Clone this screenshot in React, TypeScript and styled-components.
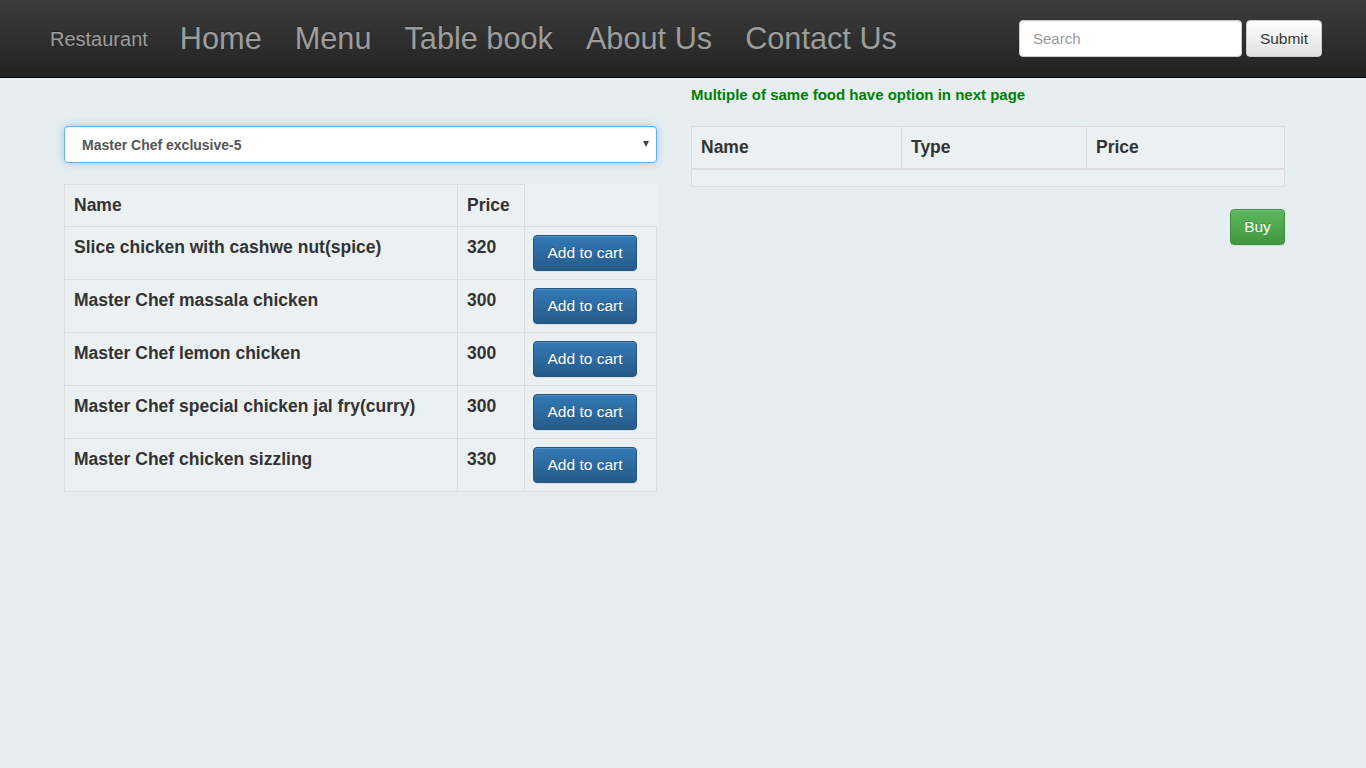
import React from "react";
import styled, { createGlobalStyle } from "styled-components";

const Global = createGlobalStyle`
  html, body { margin: 0; padding: 0; }
  body {
    background: #e6eef1;
    font-family: "Liberation Sans", Arial, Helvetica, sans-serif;
    color: #333;
    min-height: 768px;
  }
  * { box-sizing: border-box; }
`;

const NavBar = styled.nav`
  height: 78px;
  background: linear-gradient(to bottom, #3c3c3c 0%, #222 100%);
  border-bottom: 1px solid #080808;
  display: flex;
  align-items: center;
  padding: 0 44px 0 50px;
`;

const Brand = styled.a`
  font-size: 20px;
  color: #9d9d9d;
  text-decoration: none;
  text-shadow: 0 -1px 0 rgba(0, 0, 0, 0.25);
  margin-right: 32px;
  line-height: 28px;
`;

const NavList = styled.ul`
  display: flex;
  gap: 33px;
  list-style: none;
  margin: 0;
  padding: 0;
  flex: 1;
`;

const NavLink = styled.a`
  font-size: 30.7px;
  color: #9d9d9d;
  text-decoration: none;
  text-shadow: 0 -1px 0 rgba(0, 0, 0, 0.25);
  line-height: 36px;
`;

const SearchForm = styled.form`
  display: flex;
  gap: 4px;
  align-items: center;
`;

const SearchInput = styled.input`
  width: 223px;
  height: 37px;
  font-family: inherit;
  font-size: 15px;
  padding: 6px 13px;
  border: 1px solid #ccc;
  border-radius: 4px;
  background: #fff;
  color: #555;
  box-shadow: inset 0 1px 1px rgba(0, 0, 0, 0.075);
  outline: none;
  &::placeholder { color: #999; }
`;

const SubmitButton = styled.button`
  height: 37px;
  width: 76px;
  font-family: inherit;
  font-size: 15.5px;
  color: #333;
  border: 1px solid #ccc;
  border-radius: 4px;
  background: linear-gradient(to bottom, #fff 0%, #e0e0e0 100%);
  box-shadow: inset 0 1px 0 rgba(255, 255, 255, 0.15), 0 1px 1px rgba(0, 0, 0, 0.075);
  text-shadow: 0 1px 0 #fff;
  padding: 0;
`;

const Main = styled.main`
  display: flex;
  gap: 34px;
  padding-left: 64px;
  align-items: flex-start;
`;

const LeftCol = styled.section`
  width: 593px;
  padding-top: 48px;
`;

const RightCol = styled.section`
  width: 594px;
  padding-top: 7px;
`;

const SelectWrap = styled.div`
  position: relative;
  margin-bottom: 21px;
`;

const Select = styled.select`
  appearance: none;
  -webkit-appearance: none;
  display: block;
  width: 100%;
  height: 37px;
  padding: 0 17px;
  font-family: inherit;
  font-size: 14px;
  font-weight: bold;
  color: #555;
  background: #fff;
  border: 1px solid #66afe9;
  border-radius: 4px;
  box-shadow: inset 0 1px 1px rgba(0, 0, 0, 0.075), 0 0 8px rgba(102, 175, 233, 0.6);
  outline: none;
`;

const Caret = styled.span`
  position: absolute;
  right: 8px;
  top: 15px;
  width: 0;
  height: 0;
  border-left: 3px solid transparent;
  border-right: 3px solid transparent;
  border-top: 6px solid #444;
  pointer-events: none;
`;

const Table = styled.table`
  width: 100%;
  border-collapse: collapse;
  background: #ebf0f2;
  font-size: 17.5px;
  font-weight: bold;
  color: #333;
  line-height: 25px;
`;

const HeadCell = styled.th<{ $w?: number; $blank?: boolean; $thick?: boolean }>`
  text-align: left;
  vertical-align: top;
  padding: 8px 8px 8px 9px;
  border: 1px solid #ddd;
  ${(p) => (p.$thick ? "border-bottom: 2px solid #ddd;" : "")}
  ${(p) => (p.$w ? `width: ${p.$w}px;` : "")}
  ${(p) => (p.$blank ? "border-top-color: transparent; border-right-color: transparent;" : "")}
`;

const Cell = styled.td<{ $action?: boolean }>`
  vertical-align: top;
  padding: 8px 8px 8px ${(p) => (p.$action ? 8 : 9)}px;
  border: 1px solid #ddd;
`;

const EmptyCell = styled.td`
  height: 17px;
  padding: 0;
  border: 1px solid #ddd;
`;

const CartButton = styled.button`
  display: block;
  height: 36px;
  width: 104px;
  font-family: inherit;
  font-size: 15.5px;
  font-weight: normal;
  color: #fff;
  border: 1px solid #245580;
  border-radius: 4px;
  background: linear-gradient(to bottom, #337ab7 0%, #265a88 100%);
  box-shadow: inset 0 1px 0 rgba(255, 255, 255, 0.15), 0 1px 1px rgba(0, 0, 0, 0.075);
  text-shadow: 0 -1px 0 rgba(0, 0, 0, 0.2);
  padding: 0;
`;

const Notice = styled.p`
  margin: 0 0 21px;
  color: #008000;
  font-size: 15px;
  font-weight: bold;
  line-height: 20px;
`;

const BuyRow = styled.div`
  display: flex;
  justify-content: flex-end;
  margin-top: 22px;
`;

const BuyButton = styled.button`
  height: 36px;
  width: 55px;
  font-family: inherit;
  font-size: 15.5px;
  color: #fff;
  border: 1px solid #3e8f3e;
  border-radius: 4px;
  background: linear-gradient(to bottom, #5cb85c 0%, #419641 100%);
  box-shadow: inset 0 1px 0 rgba(255, 255, 255, 0.15), 0 1px 1px rgba(0, 0, 0, 0.075);
  text-shadow: 0 -1px 0 rgba(0, 0, 0, 0.2);
  padding: 0;
`;

const foods = [
  { name: "Slice chicken with cashwe nut(spice)", price: 320 },
  { name: "Master Chef massala chicken", price: 300 },
  { name: "Master Chef lemon chicken", price: 300 },
  { name: "Master Chef special chicken jal fry(curry)", price: 300 },
  { name: "Master Chef chicken sizzling", price: 330 },
];

export default function App() {
  return (
    <>
      <Global />
      <NavBar>
        <Brand href="#">Restaurant</Brand>
        <NavList>
          {["Home", "Menu", "Table book", "About Us", "Contact Us"].map((l) => (
            <li key={l}>
              <NavLink href="#">{l}</NavLink>
            </li>
          ))}
        </NavList>
        <SearchForm onSubmit={(e) => e.preventDefault()}>
          <SearchInput placeholder="Search" />
          <SubmitButton type="submit">Submit</SubmitButton>
        </SearchForm>
      </NavBar>
      <Main>
        <LeftCol>
          <SelectWrap>
            <Select defaultValue="5">
              <option value="5">Master Chef exclusive-5</option>
            </Select>
            <Caret />
          </SelectWrap>
          <Table>
            <tbody>
              <tr>
                <HeadCell $w={393}>Name</HeadCell>
                <HeadCell $w={67}>Price</HeadCell>
                <HeadCell $blank />
              </tr>
              {foods.map((f) => (
                <tr key={f.name}>
                  <Cell>{f.name}</Cell>
                  <Cell>{f.price}</Cell>
                  <Cell $action>
                    <CartButton>Add to cart</CartButton>
                  </Cell>
                </tr>
              ))}
            </tbody>
          </Table>
        </LeftCol>
        <RightCol>
          <Notice>Multiple of same food have option in next page</Notice>
          <Table>
            <thead>
              <tr>
                <HeadCell $w={210} $thick>Name</HeadCell>
                <HeadCell $w={185} $thick>Type</HeadCell>
                <HeadCell $thick>Price</HeadCell>
              </tr>
            </thead>
            <tbody>
              <tr>
                <EmptyCell colSpan={3} />
              </tr>
            </tbody>
          </Table>
          <BuyRow>
            <BuyButton>Buy</BuyButton>
          </BuyRow>
        </RightCol>
      </Main>
    </>
  );
}
